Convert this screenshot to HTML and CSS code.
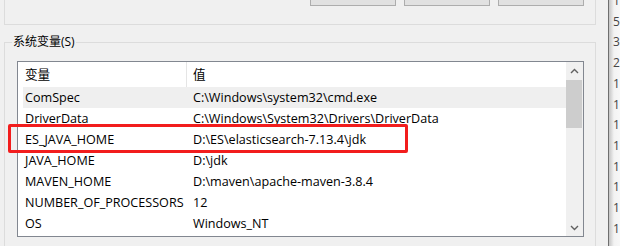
FILE: index.html
```html
<!DOCTYPE html>
<html lang="zh-CN">
<head>
    <meta charset="UTF-8">
    <meta name="viewport" content="width=device-width, initial-scale=1.0">
    <title>系统变量</title>
    <link rel="stylesheet" href="styles.css">
</head>
<body>
    <div class='screen'>
    <div class='dialog'>
        <div class='group-top'>
            <div class='btn'></div>
            <div class='btn'></div>
            <div class='btn'></div>
        </div>

        <fieldset class='group'>
            <legend>系统变量(S)</legend>
            <div class='listbox'>
                <div class='list'>
                    <div class='head'>
                        <div class='cell'>变量</div>
                        <div class='cell'>值</div>
                    </div>
                    <div class='row selected'>
                        <div class='cell'>ComSpec</div>
                        <div class='cell'>C:\Windows\system32\cmd.exe</div>
                    </div>
                    <div class='row'>
                        <div class='cell'>DriverData</div>
                        <div class='cell'>C:\Windows\System32\Drivers\DriverData</div>
                    </div>
                    <div class='row'>
                        <div class='cell'>ES_JAVA_HOME</div>
                        <div class='cell'>D:\ES\elasticsearch-7.13.4\jdk</div>
                    </div>
                    <div class='row'>
                        <div class='cell'>JAVA_HOME</div>
                        <div class='cell'>D:\jdk</div>
                    </div>
                    <div class='row'>
                        <div class='cell'>MAVEN_HOME</div>
                        <div class='cell'>D:\maven\apache-maven-3.8.4</div>
                    </div>
                    <div class='row'>
                        <div class='cell'>NUMBER_OF_PROCESSORS</div>
                        <div class='cell'>12</div>
                    </div>
                    <div class='row'>
                        <div class='cell'>OS</div>
                        <div class='cell'>Windows_NT</div>
                    </div>
                </div>
                <div class='scrollbar'>
                    <div class='arrow'>
                        <svg width="9" height="6" viewBox="0 0 9 6"><polyline points="1,5 4.5,1.5 8,5" fill="none" stroke="#606060" stroke-width="1.4"/></svg>
                    </div>
                    <div class='track'><div class='thumb'></div></div>
                    <div class='arrow'>
                        <svg width="9" height="6" viewBox="0 0 9 6"><polyline points="1,1 4.5,4.5 8,1" fill="none" stroke="#606060" stroke-width="1.4"/></svg>
                    </div>
                </div>
            </div>
        </fieldset>

        <!-- red annotation box -->
        <div class='highlight'></div>
    </div>
    <div class='edge'>
        <div class='numbers'>
            <div>1</div><div>5</div><div>3</div><div>2</div>
            <div>1</div><div>1</div><div>1</div><div>1</div>
            <div>1</div><div>1</div><div>1</div><div>1</div>
        </div>
    </div>
    </div>
</body>
</html>
```

FILE: styles.css
```css
body {
    margin: 0;
    background-color: #f0f0f0;
    font-family: "Open Sans", "Noto Sans CJK SC", sans-serif;
    font-size: 12.6px;
    color: #000;
    overflow: hidden;
}
div.screen {
    display: flex;
    width: 620px;
    height: 246px;
    overflow: hidden;
}
div.dialog {
    position: relative;
    width: 608px;
    flex: none;
}

/* upper group, only its bottom part is on screen */
div.group-top {
    display: flex;
    justify-content: flex-end;
    align-items: flex-start;
    gap: 8px;
    padding-right: 11px;
    margin-left: 4px;
    width: 592px;
    height: 25px;
    box-sizing: border-box;
    border: 1px solid #dcdcdc;
    border-top: none;
}
div.btn {
    margin-top: -17px;
    width: 86px;
    height: 23px;
    box-sizing: border-box;
    background-color: #e1e1e1;
    border: 1px solid #adadad;
}

/* system variables group */
fieldset.group {
    margin: 9px 0 0 4px;
    width: 592px;
    min-height: 230px;
    box-sizing: border-box;
    padding: 11px 0 0 12px;
    border: 1px solid #dcdcdc;
}
fieldset.group legend {
    margin-left: -5px;
    padding: 0 1px;
    line-height: 16px;
    font-size: 12px;
}

div.listbox {
    display: flex;
    width: 567px;
    height: 176px;
    box-sizing: border-box;
    border: 1px solid #828790;
    background-color: #fff;
}
div.list {
    flex: 1;
}
div.head {
    display: grid;
    grid-template-columns: 169px 1fr;
    height: 25px;
    line-height: 25px;
}
div.head div.cell:first-child {
    padding-left: 7px;
    border-right: 1px solid #e5e5e5;
}
div.head div.cell:last-child {
    padding-left: 6px;
}
div.row {
    display: grid;
    grid-template-columns: 170px 1fr;
    margin-left: 5px;
    height: 21px;
    line-height: 21px;
    white-space: nowrap;
}
div.row div.cell:first-child {
    padding-left: 2px;
}
div.row.selected {
    background-color: #efefef;
}

div.scrollbar {
    width: 17px;
    display: flex;
    flex-direction: column;
    background-color: #f0f0f0;
}
div.arrow {
    height: 17px;
    display: flex;
    align-items: center;
    justify-content: center;
}
div.track {
    flex: 1;
}
div.thumb {
    margin: 1px 1px 0 0;
    height: 48px;
    background-color: #cdcdcd;
}

div.highlight {
    position: absolute;
    left: 8px;
    top: 124px;
    width: 400px;
    height: 29px;
    box-sizing: border-box;
    border: 3px solid #f21d1d;
    border-radius: 2px;
}

/* window behind the dialog */
div.edge {
    flex: 1;
    border-left: 1px solid #6e6e6e;
    background: linear-gradient(to right, #c4c4c4, #f3f3f3 5px, #f7f7f7);
}
div.numbers {
    margin-top: -9px;
    padding-left: 4px;
    font-size: 12px;
    line-height: 20.7px;
    color: #444;
}
```
